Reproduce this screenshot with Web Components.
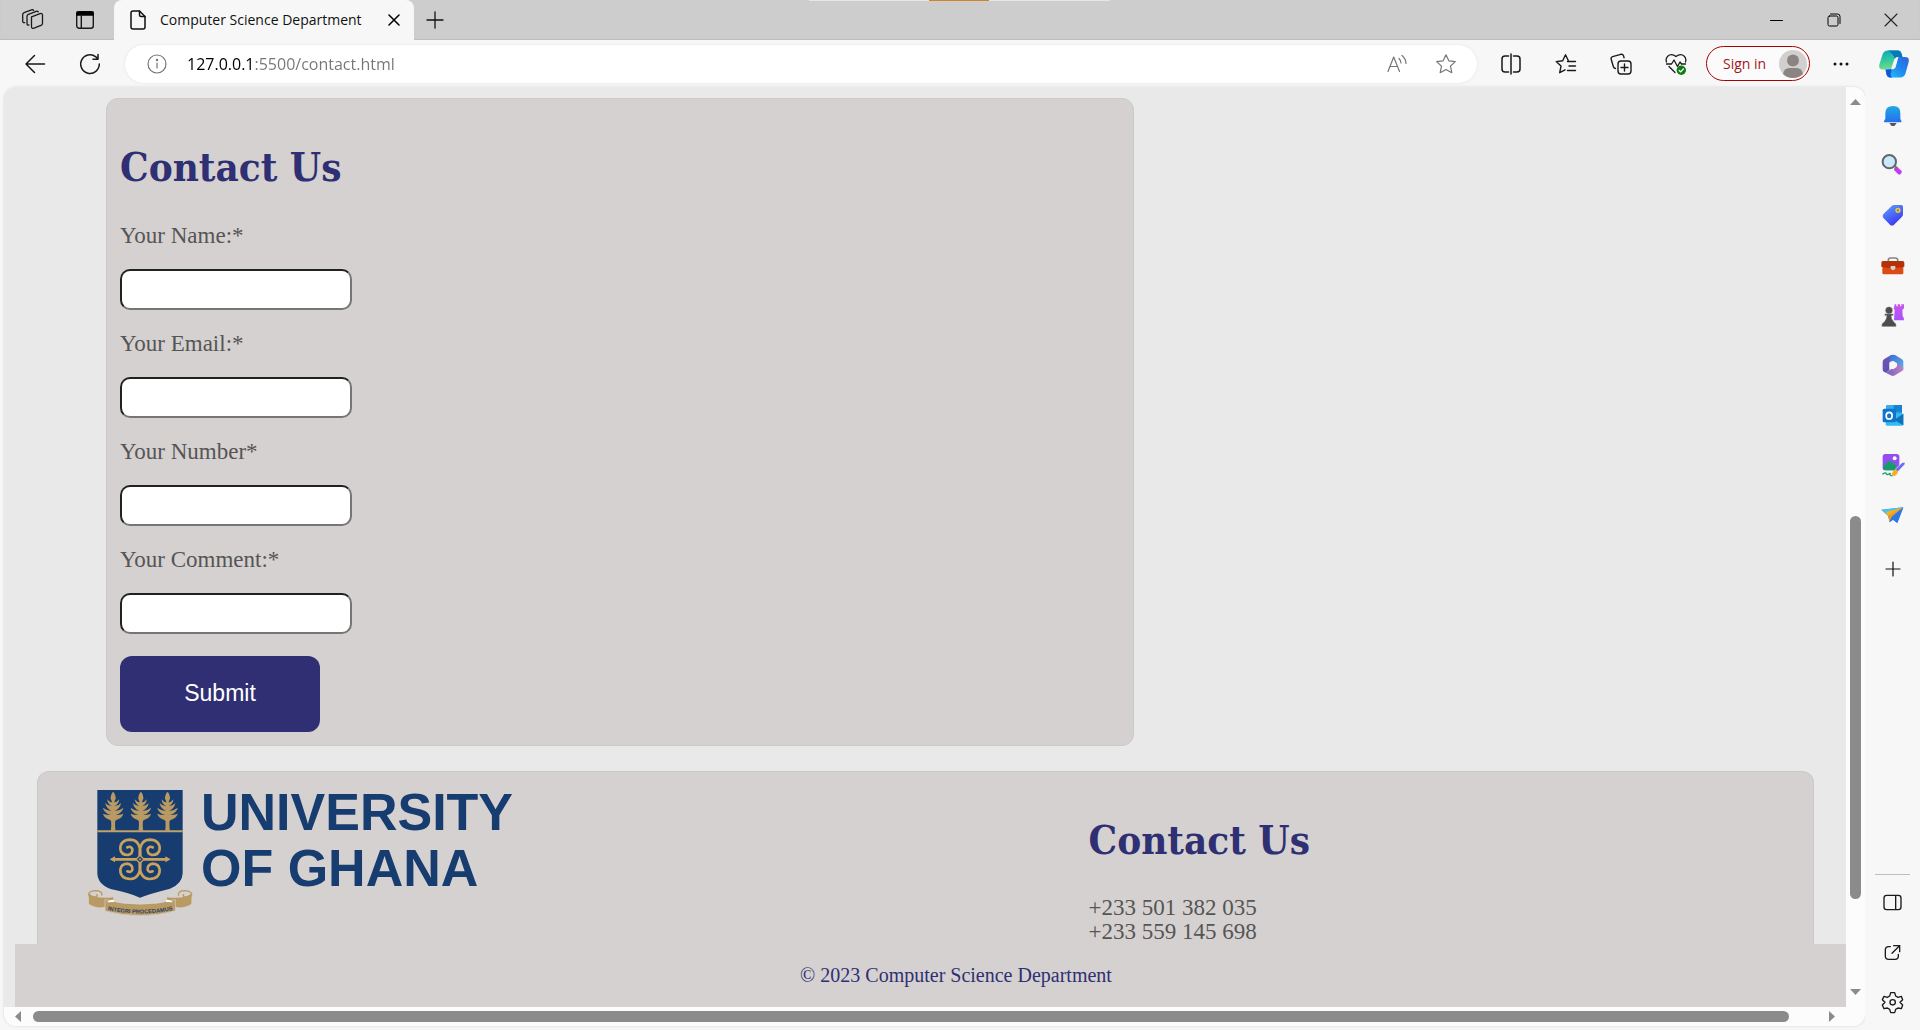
<!DOCTYPE html>
<html lang="en">
<head>
<meta charset="utf-8">
<title>Computer Science Department</title>
<style>
  html, body { margin: 0; height: 100%; }
  body { overflow: hidden; background: #f7f7f7; font-family: "Open Sans", "Noto Sans", sans-serif; }
</style>
</head>
<body>
<browser-window>
  <tab-strip slot="tabs">Computer Science Department</tab-strip>
  <tool-bar slot="toolbar" url="127.0.0.1:5500/contact.html"></tool-bar>
  <scroll-view slot="view">
    <contact-card heading="Contact Us">
      <form-field name="name" type="text">Your Name:*</form-field>
      <form-field name="email" type="email">Your Email:*</form-field>
      <form-field name="number" type="tel">Your Number*</form-field>
      <form-field name="comment" type="text">Your Comment:*</form-field>
      <submit-button>Submit</submit-button>
    </contact-card>
    <info-panel>
      <university-logo slot="logo"></university-logo>
      <section-title slot="contact">Contact Us</section-title>
      <span slot="phone">+233 501 382 035</span>
      <span slot="phone">+233 559 145 698</span>
    </info-panel>
    <page-footer>© 2023 Computer Science Department</page-footer>
  </scroll-view>
  <side-bar slot="side"></side-bar>
</browser-window>

<script>
const line = (w, h, d, color = '#1a1a1a', sw = 1.5) =>
  `<svg width="${w}" height="${h}" viewBox="0 0 ${w} ${h}" fill="none" stroke="${color}" stroke-width="${sw}" stroke-linecap="round" stroke-linejoin="round">${d}</svg>`;
const art = (x, y, d) => `<svg width="24" height="24" viewBox="${x} ${y} 72 72">${d}</svg>`;

const ICONS = {
  workspaces: line(24, 22, '<path d="M10.5 7.8l8.6-3.2q2.4-.6 2.4 1.6v8q0 1.6-1.500 2.100l-7 2.900q-2.500.8-2.500-1.600z"/><path d="M8 15.900q-2 .6-2-1.200V7.300q0-1.400 1.400-1.900l7.800-3q1.300-.4 2 .4"/><path d="M3.700 13.600q-2 .5-2-1.300V5.500q0-1.400 1.400-1.900l7.400-2.700q1.400-.4 2.100.3"/>', '#1a1a1a', 1.3),
  tabsMenu: line(20, 20, '<rect x="1.700" y="1.700" width="16.600" height="16.600" rx="2.500"/><path d="M2 2h16v3H2z" fill="#000" stroke="#000"/><path d="M6.300 5v13"/>', '#1a1a1a', 1.4),
  file: line(16, 20, '<path d="M3 1h6.500L15 6.500V17q0 2-2 2H3q-2 0-2-2V3q0-2 2-2z"/><path d="M9.500 1v4q0 1.500 1.500 1.500h4"/>', '#111', 1.5),
  closeTab: line(12, 12, '<path d="M1 1l10 10M11 1L1 11"/>', '#000', 1.5),
  plus: line(18, 18, '<path d="M9 1v16M1 9h16"/>', '#111', 1.3),
  minimize: line(13, 13, '<path d="M.5 6.500h12"/>', '#000', 1),
  restore: line(14, 14, '<rect x="1" y="3" width="10" height="10" rx="1.500"/><path d="M3.500 1h7q2.500 0 2.500 2.500v7"/>', '#000', 1),
  close: line(14, 14, '<path d="M1 1l12 12M13 1L1 13"/>', '#222', 1.1),
  back: line(22, 20, '<path d="M10.500 1.500L2 10l8.500 8.500M2 10h18.500"/>', '#1a1a1a', 1.5),
  refresh: line(22, 22, '<path d="M20.300 11a9.300 9.300 0 1 1-3.500-7.200l2 2M19 1.500v4.800h-5"/>', '#1a1a1a', 1.5),
  info: line(20, 20, '<circle cx="10" cy="10" r="9"/><path d="M10 9v5"/><circle cx="10" cy="6" r=".6" fill="#767676"/>', '#767676', 1.2),
  readAloud: line(20, 20, '<path d="M1 17.500L6.700 3l5.800 14.500M3 12.500h7.500M12 4.500q2 2 2 4.500M15 1.500q4 3.500 4 8"/>', '#767676', 1.2),
  star: line(22, 22, '<path d="M11 1.800l2.800 6 6.500.8-4.800 4.500 1.300 6.600L11 16.500l-5.800 3.200 1.300-6.600L1.700 8.600l6.500-.8z"/>', '#767676', 1.2),
  split: line(20, 22, '<path d="M7.500 3H4q-3 0-3 3v10q0 3 3 3h3.500M12.500 3H16q3 0 3 3v10q0 3-3 3h-3.500M10 1v20"/>', '#1a1a1a', 1.5),
  favorites: line(22, 22, '<path d="M13.500 8L10.500 1.800 7.700 7.800l-6.500.8L6 13.100l-1.300 6.600L10 16.800M12.500 8.500H20.500M14 13h6.500M12.500 17.500h8"/>', '#1a1a1a', 1.4),
  collections: line(22, 22, '<rect x="8" y="8" width="13" height="13" rx="3"/><path d="M14.500 11v7M11 14.500h7M5.500 15.500q-1.700-.2-2.200-2L1.200 6.300q-.6-2 1.400-2.700l8.200-2.300q2-.5 2.700 1.400l.5 2"/>', '#1a1a1a', 1.4),
  health: line(22, 24, '<path d="M1.500 10Q.3 6.500 2.700 4.200 6.500.8 11 4.500q4.500-3.700 8.300-.3 2.300 2.300 1.200 5.800M1.500 12h5L9 8l3.500 6.500L15 10l1.500 2h4M4 14.500l6 6"/><circle cx="16.300" cy="18.300" r="4.700" fill="#107c10" stroke="none"/><path d="M14.300 18.500l1.500 1.400 2.600-3" stroke="#fff"/>', '#1a1a1a', 1.3),
  more: '<svg width="18" height="6" viewBox="0 0 18 6"><g fill="#111"><circle cx="3" cy="3" r="1.500"/><circle cx="9" cy="3" r="1.500"/><circle cx="15" cy="3" r="1.500"/></g></svg>',
  avatar: '<svg width="28" height="28" viewBox="0 0 28 28"><circle cx="14" cy="14" r="14" fill="#d2d0ce"/><circle cx="14" cy="10.500" r="6" fill="#8a8583"/><path d="M4 24q1-6 6.500-6h7q5.500 0 6.500 6-4 4-10 4t-10-4z" fill="#8a8583"/></svg>',
  copilot: `<svg width="30" height="28" viewBox="0 0 30 28"><defs>
    <linearGradient id="ca" x1="0" y1="0" x2=".2" y2="1"><stop offset="0" stop-color="#0aa3c8"/><stop offset=".5" stop-color="#2fc6a0"/><stop offset="1" stop-color="#71d98a"/></linearGradient>
    <linearGradient id="cb" x1="1" y1="0" x2="0" y2="1"><stop offset="0" stop-color="#2f62d8"/><stop offset=".5" stop-color="#1e8cf0"/><stop offset="1" stop-color="#1fc8f8"/></linearGradient></defs>
    <path d="M9 .5h10q2.500 0 3.500 3l1 3.500h-4q-3 0-4 3l-2 6.500q-1 3-4 3H4q-5 0-3.500-5.500L3.500 4.500Q5 .5 9 .5z" fill="url(#ca)"/>
    <path d="M9 .5h10q2.500 0 3.500 3l1 3.500h-4q-3 0-3.500 2Q14 3 9 .5z" fill="#0878b8"/>
    <path d="M21 27.500H11q-2.500 0-3.500-3l-1-5H9q4 0 5-3l2-6.500q1-3 4-3h6q5 0 3.500 5.500L26.500 23.500q-1.500 4-5.500 4z" fill="url(#cb)"/>
    <path d="M11 27.500q-2.500 0-3.500-3l-1-5H9q2.500 0 4-1l-1 4q-1 4 1.500 5z" fill="#1456d8"/>
    <path d="M15.500 9q1-2 4-2l-3 10.500q-1 2-4.500 2z" fill="#f7f7f7"/></svg>`,
  bell: art(182, 39, '<defs><linearGradient id="g" x2="0" y2="1"><stop stop-color="#22a9e4"/><stop offset="1" stop-color="#246ff0"/></linearGradient></defs><path d="M207 99h22l-6 8q-5 2-10 0z" fill="#555"/><path d="M190 95l5-9V70q0-22 23-22t22 22v16l4 9-3 2h-48z" fill="url(#g)"/>'),
  search: art(182, 189, '<path d="M222 233l8-3 14 13q2 5-3 9-4 3-8 0l-12-12z" fill="#c43bf5"/><path d="M222 227l9 8" stroke="#777" stroke-width="6"/><circle cx="207" cy="215" r="20" fill="#c9e9fb" stroke="#626669" stroke-width="6"/>'),
  tag: art(182, 339, '<defs><linearGradient id="g" x2=".6" y2="1"><stop stop-color="#63a6fb"/><stop offset="1" stop-color="#3b37f2"/></linearGradient></defs><path d="M190 371l24-23q3-3 7-3h22q5 0 5 5v23q0 4-3 7l-24 24q-6 5-12 0l-19-19q-6-7 0-14z" fill="url(#g)"/><circle cx="233" cy="361" r="6" fill="#69b" stroke="#f6cd29" stroke-width="4"/>'),
  toolbox: art(182, 489, '<path d="M204 516v-6q0-6 7-6h14q7 0 7 6v6" fill="none" stroke="#858585" stroke-width="5"/><rect x="186" y="520" width="63" height="33" rx="4" fill="#dd4a16"/><path d="M188 513h59q5 0 5 5v12q-34 8-69 0v-12q0-5 5-5z" fill="#b53209"/><path d="M211 528h14v7q-7 12-14 0z" fill="#d5d1cf"/>'),
  chess: art(182, 639, '<defs><linearGradient id="g" x2="0" y2="1"><stop stop-color="#c957ee"/><stop offset="1" stop-color="#a950fb"/></linearGradient></defs><path d="M223 643h5v6h4v-6h7v6h4v-6h8v12l-5 5 1 19q4 2 4 12h-30l2-31-3-4z" fill="url(#g)"/><g fill="#4d4d4d" stroke="#f7f7f7" stroke-width="1"><path d="M193 671h26v6h-6q0 12 9 20 8 5 5 13h-42q-4-9 6-14 7-7 8-19h-6z"/><circle cx="206" cy="661" r="11"/></g>'),
  m365: art(182, 39, '<defs><linearGradient id="a" x2="1" y2="1"><stop stop-color="#7d4fb4"/><stop offset="1" stop-color="#4a55b4"/></linearGradient><linearGradient id="b" x2="1" y2="1"><stop stop-color="#3e6bd0"/><stop offset="1" stop-color="#62b4f0"/></linearGradient><linearGradient id="c" x2="1" y2="0"><stop stop-color="#6f5cc0"/><stop offset="1" stop-color="#c080c4"/></linearGradient></defs><path d="M214 44l-22 13q-5 3-5 8v23q0 8 8 9 6 0 12-6V67l16-10z" fill="url(#a)"/><path d="M210 47q7-5 14-2l20 12q5 3 5 8v27l-19-17V70l-12-8-11 5V54q0-4 3-7z" fill="url(#b)"/><path d="M249 84q0 7-5 10l-20 12q-6 4-13 0l-20-11q12 3 20-7l6-2 13-7V68z" fill="url(#c)"/><path d="M218 65l10 6v11l-10 6-10-6V71z" fill="#f7f7f7"/>'),
  outlook: art(182, 189, '<rect x="197" y="195" width="48" height="46" rx="3" fill="#37aeea"/><path d="M220 195h25v22h-25z" fill="#1684d4"/><path d="M196 222l53-1v32q0 4-4 4h-45q-4 0-4-4z" fill="#31bdf2"/><path d="M249 221v35l-28-16z" fill="#1470b8"/><rect x="187" y="206" width="40" height="41" rx="5" fill="#0e74cc"/><ellipse cx="206.500" cy="227" rx="9" ry="10" fill="none" stroke="#fff" stroke-width="5"/>'),
  designer: art(182, 339, '<rect x="187" y="342" width="50" height="49" rx="8" fill="#914ff0"/><path d="M189 381q18-29 33-10l10 14q-4 6-11 6h-25q-7 0-7-10z" fill="#169c68"/><circle cx="223" cy="355" r="6" fill="#fff"/><path d="M186 403q10-8 12-2t12-2q-4 9 8 8" fill="none" stroke="#19a36b" stroke-width="4"/><path d="M225 388l20-20q7-4 9 2 0 4-3 6l-19 20z" fill="#6d6bef" stroke="#f7f7f7" stroke-width="2"/><path d="M214 408q0-17 12-19 9 3 6 10-5 11-18 9z" fill="#f7ad25"/>'),
  send: art(182, 489, '<path d="M183 509l66-7-18 47-13-10-10 8-5-20z" fill="#2d87ef"/><path d="M183 509l66-7-46 24z" fill="#45c4f3"/><path d="M249 502l-46 24 5 20 6-15z" fill="#f09a16"/><path d="M249 502l-35 29-6 15 10-7 13 10z" fill="#2b79e8"/><path d="M196 516l53-14-46 25z" fill="#f9ae21"/>'),
  add: line(16, 16, '<path d="M8 1v14M1 8h14"/>', '#111', 1.2),
  panel: art(303, 120, '<g fill="none" stroke="#1a1a1a" stroke-width="4"><rect x="312" y="136" width="51" height="43" rx="8"/><path d="M347 136v43"/></g>'),
  external: art(303, 270, '<g fill="none" stroke="#1a1a1a" stroke-width="4" stroke-linecap="round"><path d="M331 290h-5q-10 0-10 10v18q0 10 10 10h19q10 0 10-10v-5M341 287h18v18M358 288l-22 22"/></g>'),
  gear: art(303, 420, '<g fill="none" stroke="#1a1a1a" stroke-width="4" stroke-linejoin="round"><path d="M332 428h12l3 10 7 4 10-3 4 10-8 8 8 8-4 11-10-2-7 4-3 10h-12l-3-10-7-4-10 2-5-11 8-8-8-8 5-10 10 3 7-4z"/><circle cx="338" cy="457" r="8"/></g>')
};

/* Registers an element whose open shadow root holds the given styles and markup. */
function define(tag, css, markup) {
  customElements.define(tag, class extends HTMLElement {
    connectedCallback() {
      if (this.shadowRoot) return;
      const root = this.attachShadow({ mode: 'open' });
      const html = typeof markup === 'function' ? markup(this) : markup;
      root.innerHTML = `<style>:host,*{box-sizing:border-box}${css}</style>${html}`;
    }
  });
}

define('ui-icon', ':host{display:inline-flex} svg{display:block}', el => ICONS[el.getAttribute('name')]);

define('icon-button', `
  :host{display:flex;flex:none;align-items:center;justify-content:center}
  button{display:flex;align-items:center;justify-content:center;width:100%;height:100%;padding:0;border:0;background:none}
`, el => `<button type="button" aria-label="${el.getAttribute('label')}"><ui-icon name="${el.getAttribute('icon')}"></ui-icon></button>`);

define('browser-window', `
  :host{display:flex;flex-direction:column;height:100vh;background:#f7f7f7}
  .body{display:flex;flex:1;min-height:0}
  ::slotted(scroll-view){flex:1;min-width:0;margin:0 0 4px 4px}
`, `<slot name="tabs"></slot><slot name="toolbar"></slot>
    <div class="body"><slot name="view"></slot><slot name="side"></slot></div>`);

define('tab-strip', `
  :host{display:flex;position:relative;height:40px;padding:0 1px 0 7px;background:#cdcdcd;box-shadow:inset 0 -1px 1px #bdbdbd}
  icon-button{width:52px}
  .tab{display:flex;align-items:center;position:relative;width:300px;margin-left:3px;padding:0 8px 0 16px;background:#f7f7f7;border-radius:8px 8px 0 0;color:#111;font-size:14px;line-height:20px;white-space:nowrap}
  .title{flex:1;margin-left:14px}
  .tab icon-button{width:24px;height:24px}
  .new{width:42px}
  .controls{display:flex;margin-left:auto}
  .controls icon-button{width:57px}
  .peek{position:absolute;top:0;left:50%;width:301px;height:1px;margin-left:-151px;background:linear-gradient(90deg,#e6e6e6 120px,#d0842a 120px,#d0842a 180px,#e6e6e6 180px)}
`, `<icon-button icon="workspaces" label="Workspaces"></icon-button>
    <icon-button icon="tabsMenu" label="Tab actions"></icon-button>
    <div class="tab"><ui-icon name="file"></ui-icon><span class="title"><slot></slot></span><icon-button icon="closeTab" label="Close tab"></icon-button></div>
    <icon-button class="new" icon="plus" label="New tab"></icon-button>
    <div class="controls"><icon-button icon="minimize" label="Minimize"></icon-button><icon-button icon="restore" label="Restore"></icon-button><icon-button icon="close" label="Close"></icon-button></div>
    <div class="peek"></div>`);

define('tool-bar', `
  :host{display:flex;align-items:center;height:47px;padding:0 1px 0 7px;background:#f7f7f7}
  icon-button{width:55px;height:38px}
  .address{display:flex;align-items:center;flex:1;min-width:0;height:38px;margin:0 6px 0 8px;padding:0 7px 0 12px;background:#fff;border-radius:19px;box-shadow:0 0 3px #e2e2e2}
  .address icon-button{width:49px}
  .address .info{width:40px}
  input{flex:1;min-width:0;height:30px;margin-left:10px;padding:0;border:0;outline:0;font:16px/24px "Open Sans","Noto Sans",sans-serif;background:linear-gradient(90deg,#000 68px,#767676 68px);-webkit-background-clip:text;background-clip:text;color:transparent}
  .signin{display:flex;align-items:center;justify-content:space-between;width:104px;height:35px;margin:0 3px;padding:0 2px 0 16px;border:1px solid #a80000;border-radius:18px;background:#fbfbfb;color:#a4161a;font:14px/20px "Open Sans","Noto Sans",sans-serif;white-space:nowrap}
  .copilot{width:51px}
`, el => `<icon-button icon="back" label="Back"></icon-button>
    <icon-button icon="refresh" label="Refresh"></icon-button>
    <div class="address"><icon-button class="info" icon="info" label="Site information"></icon-button>
      <input type="text" aria-label="Address" spellcheck="false" value="${el.getAttribute('url')}">
      <icon-button icon="readAloud" label="Read aloud"></icon-button><icon-button icon="star" label="Add to favorites"></icon-button></div>
    <icon-button icon="split" label="Split screen"></icon-button>
    <icon-button icon="favorites" label="Favorites"></icon-button>
    <icon-button icon="collections" label="Collections"></icon-button>
    <icon-button icon="health" label="Browser essentials"></icon-button>
    <button class="signin" type="button">Sign in<ui-icon name="avatar"></ui-icon></button>
    <icon-button icon="more" label="Settings and more"></icon-button>
    <icon-button class="copilot" icon="copilot" label="Copilot"></icon-button>`);

define('side-bar', `
  :host{display:flex;flex:none;flex-direction:column;width:55px;padding:3px 0;background:#f7f7f7}
  icon-button{height:50px}
  .add{margin-top:4px}
  hr{width:35px;height:1px;margin:auto auto 2px;border:0;background:#bdbdbd}
`, `<icon-button icon="bell" label="Notifications"></icon-button>
    <icon-button icon="search" label="Search"></icon-button>
    <icon-button icon="tag" label="Shopping"></icon-button>
    <icon-button icon="toolbox" label="Tools"></icon-button>
    <icon-button icon="chess" label="Games"></icon-button>
    <icon-button icon="m365" label="Microsoft 365"></icon-button>
    <icon-button icon="outlook" label="Outlook"></icon-button>
    <icon-button icon="designer" label="Image creator"></icon-button>
    <icon-button icon="send" label="Drop"></icon-button>
    <icon-button class="add" icon="add" label="Customize"></icon-button>
    <hr>
    <icon-button icon="panel" label="Hide sidebar"></icon-button>
    <icon-button icon="external" label="Open in new window"></icon-button>
    <icon-button icon="gear" label="Settings"></icon-button>`);

define('scroll-track', `
  :host{display:flex;align-items:center;gap:12px;padding:0 11px}
  :host([vertical]){flex-direction:column;gap:0;padding:12px 0 12px}
  .thumb{flex:1;height:11px;margin-right:28px;border-radius:6px;background:#8b8b8b}
  svg{display:block;flex:none;fill:#8b8b8b}
  .rail{display:flex;flex-direction:column;flex:1}
  .rail::before{content:"";flex:411}
  .rail::after{content:"";flex:90}
  .bar{flex:383;width:11px;border-radius:6px;background:#8b8b8b}
`, el => el.hasAttribute('vertical')
  ? `<svg width="11" height="6"><path d="M0 6L5.500 0 11 6z"/></svg><div class="rail"><div class="bar"></div></div><svg width="11" height="6"><path d="M0 0h11L5.500 6z"/></svg>`
  : `<svg width="6" height="11"><path d="M6 0v11L0 5.500z"/></svg><div class="thumb"></div><svg width="6" height="11"><path d="M0 0v11l6-5.500z"/></svg>`);

define('scroll-view', `
  :host{display:grid;grid-template:minmax(0,1fr) 19px / minmax(0,1fr) 19px;overflow:hidden;background:#fcfcfc;border-radius:12px;box-shadow:0 0 2px 1px #e8e8e8}
  .page{display:flex;flex-direction:column;overflow:hidden;padding-top:11px;background:#e9e9e9}
`, `<div class="page"><slot></slot></div><scroll-track vertical></scroll-track><scroll-track></scroll-track>`);

define('section-title', `
  :host{display:block}
  h1{margin:0;color:#2f2f73;font:bold 40px/54px Georgia,"DejaVu Serif Condensed","Liberation Serif",serif}
`, '<h1><slot></slot></h1>');

define('contact-card', `
  :host{display:block;width:calc(56% - 4px);margin-left:102px;padding:41px 13px 13px;background:#d5d1d0;border:1px solid #cbc9c9;border-radius:12px}
  form{display:flex;flex-direction:column;align-items:flex-start;gap:22px;margin-top:30px}
`, el => `<section-title>${el.getAttribute('heading')}</section-title><form><slot></slot></form>`);

define('form-field', `
  :host{display:block}
  label{display:block;color:#555;font:23px/24px Georgia,"Liberation Serif",serif}
  input{display:block;width:232px;height:41px;margin-top:21px;padding:4px 8px;background:#fff;border:2px solid;border-color:#212121 #767676 #767676 #212121;border-radius:10px;font-size:16px}
`, el => `<label for="field"><slot></slot></label><input id="field" name="${el.getAttribute('name')}" type="${el.getAttribute('type')}">`);

define('submit-button', `
  :host{display:block}
  button{display:block;width:200px;height:76px;padding:0 0 2px;border:0;border-radius:12px;background:#302f73;color:#fff;font:23px/26px "Liberation Sans",Arial,sans-serif}
`, '<button type="submit"><slot></slot></button>');

define('info-panel', `
  :host{display:grid;grid-template-columns:minmax(0,58fr) minmax(0,40fr);margin:25px 32px 0 33px;background:#d5d1d0;border:1px solid #cbc9c9;border-bottom:0;border-radius:12px 12px 0 0}
  .logo{padding:12px 0 0 50px}
  .contact{padding-top:41px}
  .phones{display:flex;flex-direction:column;margin-top:29px;color:#555;font:23px/24px Georgia,"Liberation Serif",serif}
`, `<div class="logo"><slot name="logo"></slot></div>
    <div class="contact"><slot name="contact"></slot><div class="phones"><slot name="phone"></slot></div></div>`);

define('page-footer', `
  :host{display:block;flex:1;margin-left:11px;padding:19px 0 0 51px;background:#d5d1d0;color:#2f2f73;font:20px/24px "Liberation Serif","Times New Roman",serif;text-align:center}
`, '<slot></slot>');

const tree = x => `<g transform="translate(${x} 0)"><path d="M0 68q-6 10-6 18l5 12q-8 0-15-9 2 15 14 21-10 0-20-10 4 17 19 24-14-1-26-10 4 16 24 22-11 1-24-4 5 14 22 19l3 4q1 14-1 28H9q-2-14-1-28l3-4q17-5 22-19-13 5-24 4 20-6 24-22-12 9-26 10 15-7 19-24-10 10-20 10 12-6 14-21-7 9-15 9l5-12q0-8-6-18z" transform="translate(-1.500 0)"/></g>`;
const curl = t => `<path transform="${t}" d="M0 0Q6-58-29-59-60-58-59-31-57-13-36-13-21-17-23-31-27-41-38-36"/>`;

define('university-logo', `
  :host{display:flex;gap:8px}
  svg{display:block;flex:none;margin-top:5px}
  .name{color:#163c70;font:bold 52px/56px "Liberation Sans",Arial,sans-serif;white-space:nowrap}
`, `<svg width="105" height="127" viewBox="55 58 315 381" role="img" aria-label="University crest">
      <path d="M83 61h256v250q-1 32-38 46-60 15-90 27-30-14-88-26-39-14-40-47z" fill="#163c70"/>
      <g fill="#b99a63">${tree(130)}${tree(213)}${tree(293)}<path d="M83 182h256v6H83z" fill="#bda269"/></g>
      <g transform="translate(211 269)" fill="none" stroke="#c9a25c" stroke-width="8" stroke-linecap="round">
        ${curl('scale(1 1)')}${curl('scale(-1 1)')}${curl('scale(1 -1)')}${curl('scale(-1 -1)')}
        <path d="M-78 0H-12M12 0H78"/></g>
      <path d="M120 269l16-9v18zM303 269l-16-9v18z" fill="#c9a25c"/>
      <path d="M211 257l12 12-12 12-12-12z" fill="#163c70" stroke="#c9a25c" stroke-width="4"/><circle cx="211" cy="269" r="3" fill="#c9a25c"/>
      <g fill="#b99a63"><path d="M57 371q20 18 74 12v12l-24 3v14q-28 5-49-9zM366 371q-20 18-74 12v12l24 3v14q28 5 49-9z"/>
      <path d="M106 390q105 27 211 0v34q-105 27-211 0z" stroke="#d5d1d0" stroke-width="2"/></g>
      <path d="M113 398q3-8 19-8l1 7zM309 398q-3-8-19-8l-1 7z" fill="#fff"/>
      <g fill="none" stroke="#b99a63" stroke-width="4"><path d="M96 378q4-15-19-15-21 2-20 12 5 10 20 7 9-4 3-8M327 378q-4-15 19-15 21 2 20 12-5 10-20 7-9-4-3-8"/></g>
      <path id="ribbon" d="M108 420q103 23 207 0" fill="none"/>
      <text fill="#2c3d62" font-family="Liberation Sans Narrow, Liberation Sans, sans-serif" font-weight="bold" font-size="17" text-anchor="middle"><textPath href="#ribbon" startOffset="50%">INTEGRI PROCEDAMUS</textPath></text>
    </svg>
    <div class="name"><div>UNIVERSITY</div><div>OF GHANA</div></div>`);
</script>
</body>
</html>
